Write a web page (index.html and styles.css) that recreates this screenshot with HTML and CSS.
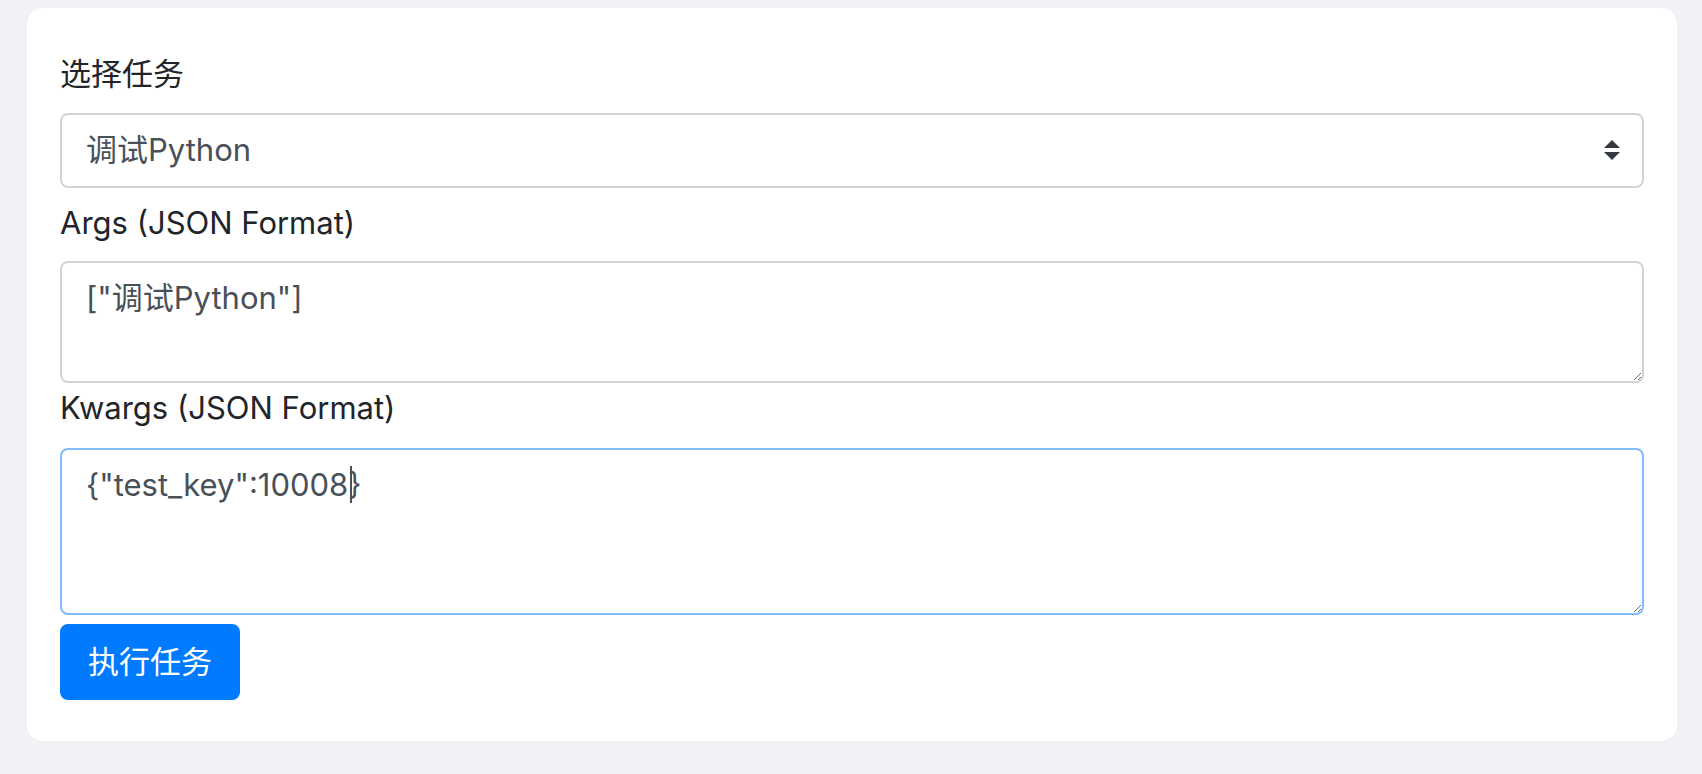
FILE: index.html
```html
<!DOCTYPE html>
<html lang="zh-CN">
<head>
<meta charset="utf-8">
<title>执行任务</title>
<link rel="stylesheet" href="styles.css">
</head>
<body>
<div class="card">
  <form class="task-form">
    <label class="field-label" for="task">选择任务</label>
    <div class="select-wrap">
      <select id="task" class="control select-control">
        <option>调试Python</option>
      </select>
      <svg class="select-arrow" viewBox="0 0 4 5" width="16" height="20" aria-hidden="true"><path d="M2 0L0 2h4zm0 5L0 3h4z" fill="#343a40"/></svg>
    </div>
    <label class="field-label" for="args">Args (JSON Format)</label>
    <textarea id="args" class="control textarea-control args-area" rows="2">["调试Python"]</textarea>
    <label class="field-label" for="kwargs">Kwargs (JSON Format)</label>
    <div class="textarea-wrap">
      <textarea id="kwargs" class="control textarea-control kwargs-area focused" rows="3">{"test_key":10008}</textarea>
      <span class="fake-caret"></span>
    </div>
    <button type="button" class="btn-primary">执行任务</button>
  </form>
</div>
</body>
</html>
```

FILE: styles.css
```css
* { box-sizing: border-box; }

html, body {
  margin: 0;
  padding: 0;
  background: #f0f2f5;
}

body {
  padding: 8px 25px 34px 27px;
  font-family: "Inter", "Noto Sans CJK SC", sans-serif;
  font-size: 31px;
  line-height: 1.5;
  color: #212529;
}

.card {
  background: #fff;
  border-radius: 16px;
  padding: 43px 33px 41px 33px;
}

.task-form {
  display: flex;
  flex-direction: column;
  align-items: stretch;
}

.field-label {
  display: block;
  margin-bottom: 15px;
  color: #212529;
}

.field-label:lang(zh) {
  letter-spacing: 0;
}

.control {
  display: block;
  width: 100%;
  font-family: inherit;
  font-size: 31px;
  line-height: 1.5;
  color: #495057;
  background: #fff;
  border: 2px solid #ced4da;
  border-radius: 8px;
  padding: 12px 24px;
  margin: 0;
  outline: none;
}

.select-wrap {
  position: relative;
  margin-bottom: 12px;
}

.select-control {
  appearance: none;
  -webkit-appearance: none;
  height: 75px;
  padding-right: 64px;
}

.select-arrow {
  position: absolute;
  right: 24px;
  top: 27px;
  pointer-events: none;
}

.textarea-control {
  resize: vertical;
}

.args-area {
  height: 122px;
  margin-bottom: 2px;
}

.textarea-wrap {
  position: relative;
  margin-top: 1px;
  margin-bottom: 9px;
}

.kwargs-area {
  height: 167px;
}

.focused {
  border-color: #80bdff;
  caret-color: transparent;
}

.fake-caret {
  position: absolute;
  left: 290px;
  top: 18px;
  width: 2px;
  height: 37px;
  background: #495057;
  pointer-events: none;
}

.btn-primary {
  align-self: flex-start;
  font-family: inherit;
  font-size: 31px;
  line-height: 1.5;
  color: #fff;
  background: #007bff;
  border: 2px solid #007bff;
  border-radius: 8px;
  padding: 13px 26px;
  cursor: pointer;
}
```
